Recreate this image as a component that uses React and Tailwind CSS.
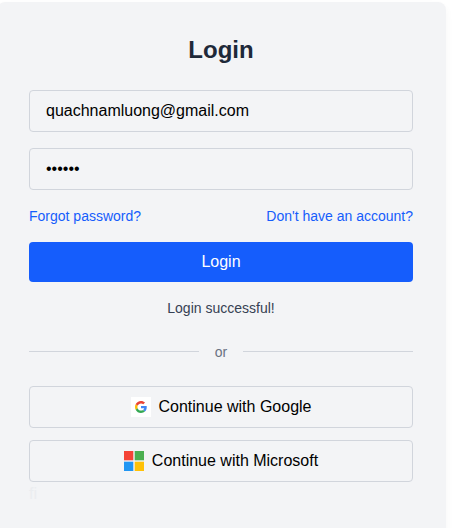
import React from "react";

function GoogleLogo() {
  return (
    <span className="flex h-5 w-5 items-center justify-center bg-white">
      <svg viewBox="0 0 48 48" className="h-3 w-3">
        <path fill="#EA4335" d="M24 9.5c3.54 0 6.71 1.22 9.21 3.6l6.85-6.85C35.9 2.38 30.47 0 24 0 14.62 0 6.51 5.38 2.56 13.22l7.98 6.19C12.43 13.72 17.74 9.5 24 9.5z" />
        <path fill="#4285F4" d="M46.98 24.55c0-1.57-.15-3.09-.38-4.55H24v9.02h12.94c-.58 2.96-2.26 5.48-4.78 7.18l7.73 6c4.51-4.18 7.09-10.36 7.09-17.65z" />
        <path fill="#FBBC05" d="M10.53 28.59c-.48-1.45-.76-2.99-.76-4.59s.27-3.14.76-4.59l-7.98-6.19C.92 16.46 0 20.12 0 24c0 3.88.92 7.54 2.56 10.78l7.97-6.19z" />
        <path fill="#34A853" d="M24 48c6.48 0 11.93-2.13 15.89-5.81l-7.73-6c-2.15 1.45-4.92 2.3-8.16 2.3-6.26 0-11.57-4.22-13.47-9.91l-7.98 6.19C6.51 42.62 14.62 48 24 48z" />
      </svg>
    </span>
  );
}

function MicrosoftLogo() {
  return (
    <svg viewBox="0 0 20 20" className="h-5 w-5">
      <rect x="0" y="0" width="9.3" height="9.3" fill="#F44336" />
      <rect x="10.7" y="0" width="9.3" height="9.3" fill="#4CAF50" />
      <rect x="0" y="10.7" width="9.3" height="9.3" fill="#2196F3" />
      <rect x="10.7" y="10.7" width="9.3" height="9.3" fill="#FFC107" />
    </svg>
  );
}

function ProviderButton({ icon, children }) {
  return (
    <button className="flex w-full items-center justify-center gap-2 rounded border border-gray-300 px-4 py-2 text-black">
      {icon}
      <span>{children}</span>
    </button>
  );
}

export default function App() {
  return (
    <div className="h-[528px] w-full overflow-hidden bg-white pt-0.5 font-['Liberation_Sans',Arial,sans-serif] text-base">
      <div className="-ml-[3px] h-[600px] w-[449px] rounded-lg bg-gray-100 py-8 pr-[33px] pl-8 shadow-[0_4px_8px_rgba(0,0,0,0.04)]">
        <h2 className="mb-6 text-center text-2xl font-bold text-gray-800">Login</h2>
        <input
          type="text"
          defaultValue="quachnamluong@gmail.com"
          className="mb-4 block w-full rounded border border-gray-300 px-4 py-2 text-black"
        />
        <input
          type="password"
          defaultValue="123456"
          className="mb-4 block w-full rounded border border-gray-300 px-4 py-2 text-black"
        />
        <div className="mb-4 flex justify-between text-sm text-blue-600">
          <a>Forgot password?</a>
          <a>Don't have an account?</a>
        </div>
        <button className="block w-full rounded bg-[#155dfc] px-4 py-2 text-white">Login</button>
        <p className="mt-4 text-center text-sm text-gray-700">Login successful!</p>
        <div className="my-6 flex items-center">
          <div className="grow border-t border-gray-300 pb-px" />
          <span className="px-4 text-sm text-gray-500">or</span>
          <div className="grow border-t border-gray-300 pb-px" />
        </div>
        <div className="space-y-3">
          <ProviderButton icon={<GoogleLogo />}>Continue with Google</ProviderButton>
          <ProviderButton icon={<MicrosoftLogo />}>Continue with Microsoft</ProviderButton>
        </div>
        <p className="text-[#ebedf0]">fi</p>
      </div>
    </div>
  );
}
